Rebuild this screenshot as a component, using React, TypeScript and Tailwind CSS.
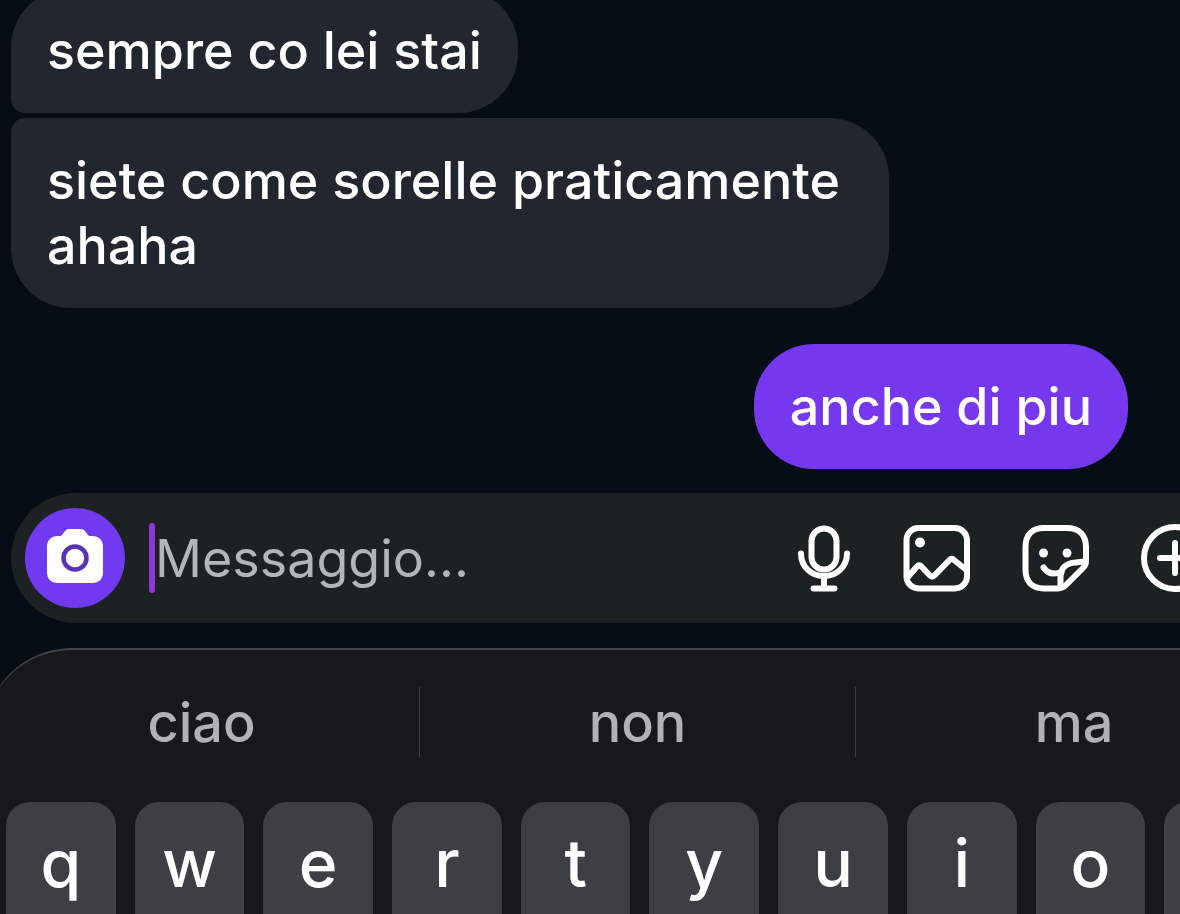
import { useState } from "react"

type Message = {
  id: number
  text: string
  mine?: boolean
  shape: string
}

const messages: Message[] = [
  { id: 1, text: "sempre co lei stai", shape: "rounded-[60px] rounded-bl-[14px]" },
  { id: 2, text: "siete come sorelle praticamente ahaha", shape: "mt-[5px] rounded-[60px] rounded-tl-[14px]" },
  { id: 3, text: "anche di piu", mine: true, shape: "mt-9 rounded-[60px]" },
]

const suggestions = ["ciao", "non", "ma"]

const topRow = ["q", "w", "e", "r", "t", "y", "u", "i", "o", "p"]

function CameraIcon() {
  return (
    <svg viewBox="0 0 56 54" className="h-[54px] w-14" fill="none" aria-hidden="true">
      <path
        d="M11 7h1.500c1.500 0 2.500-.8 3.500-2.300C18 2 19.500 0 22 0h12c2.500 0 4 2 6 4.700C41 6.200 42 7 43.500 7H45c7 0 11 4 11 11v25c0 7-4 11-11 11H11C4 54 0 50 0 43V18C0 11 4 7 11 7Z"
        fill="#fff"
      />
      <circle cx="28" cy="29" r="11.500" stroke="#5a33b4" strokeWidth="4.500" />
    </svg>
  )
}

function MicIcon() {
  return (
    <svg viewBox="0 0 56 70" className="h-[70px] w-14" fill="none" stroke="currentColor" strokeWidth="6" strokeLinecap="round" aria-hidden="true">
      <rect x="15.500" y="5.500" width="25" height="41" rx="12.500" />
      <path d="M5 30.500c0 13 10 22.500 23 22.500s23-9.500 23-22.500M28 53v12M17.500 65.500h21" />
    </svg>
  )
}

function ImageIcon() {
  return (
    <svg viewBox="0 0 68 68" className="size-[68px]" fill="none" stroke="currentColor" strokeWidth="6" strokeLinecap="round" strokeLinejoin="round" aria-hidden="true">
      <rect x="3.500" y="4" width="60.500" height="60.500" rx="12" />
      <circle cx="17" cy="18.500" r="5" fill="currentColor" stroke="none" />
      <path d="m4 54 10-11.500c1.400-1.600 3-1.600 4.400 0l8.600 9c1.400 1.500 3 1.500 4.400 0L46.500 36c1.400-1.600 3-1.600 4.400 0L63.500 46" />
    </svg>
  )
}

function StickerIcon() {
  return (
    <svg viewBox="0 0 68 68" className="size-[68px]" fill="none" stroke="currentColor" strokeWidth="6" strokeLinecap="round" strokeLinejoin="round" aria-hidden="true">
      <path d="M22 4h23c12 0 19 7 19 19v14c0 3-1 5-3 7L44 61c-2.500 2.500-4.500 3.500-8 3.500H22c-12 0-18.500-7-18.500-19V23C3.500 11 10 4 22 4Z" />
      <path d="M38.500 63V53c0-9 6-14 15-14.500l9.500-1" />
      <path d="M21.500 43.500c4 6 10 7.500 18 4.500" />
      <circle cx="21.500" cy="29" r="4.500" fill="currentColor" stroke="none" />
      <circle cx="45" cy="29" r="4.500" fill="currentColor" stroke="none" />
    </svg>
  )
}

function PlusIcon() {
  return (
    <svg viewBox="0 0 68 68" className="size-[68px]" fill="none" stroke="currentColor" strokeWidth="6" strokeLinecap="round" aria-hidden="true">
      <circle cx="34" cy="34" r="31" />
      <path d="M34 19v30M19 34h30" />
    </svg>
  )
}

const actions = [
  { label: "Messaggio vocale", Icon: MicIcon },
  { label: "Galleria", Icon: ImageIcon },
  { label: "Adesivi", Icon: StickerIcon },
  { label: "Altro", Icon: PlusIcon },
]

function Thread() {
  return (
    <section className="flex min-h-0 flex-1 flex-col justify-end overflow-hidden pr-[52px] pb-6 pl-[11px]">
      {messages.map((message) => (
        <p
          key={message.id}
          className={`max-w-[878px] shrink-0 px-9 py-[30px] text-[52px] leading-[65px] font-medium text-white ${message.shape} ${
            message.mine ? "self-end bg-[#7638ee]" : "self-start bg-[#22262e]"
          }`}
        >
          {message.text}
        </p>
      ))}
    </section>
  )
}

function Composer({ draft, onChange }: { draft: string; onChange: (value: string) => void }) {
  return (
    <div className="min-w-[1280px] px-[11px]">
      <div className="flex h-[130px] items-center rounded-full bg-[#1c2122] pr-[60px] pl-3.5 text-white">
        <button
          aria-label="Fotocamera"
          className="flex size-[100px] shrink-0 items-center justify-center rounded-full bg-[#7139f0] pb-1"
        >
          <CameraIcon />
        </button>
        <span className="ml-6 h-[70px] w-1.5 shrink-0 rounded-sm bg-[#8f35dc]" />
        <input
          aria-label="Messaggio"
          placeholder="Messaggio..."
          value={draft}
          onChange={(e) => onChange(e.target.value)}
          className="h-20 min-w-0 flex-1 bg-transparent text-[52px] caret-transparent outline-none placeholder:text-[#b3b6b9]"
        />
        <div className="flex shrink-0 items-center gap-[51px]">
          {actions.map(({ label, Icon }) => (
            <button key={label} aria-label={label}>
              <Icon />
            </button>
          ))}
        </div>
      </div>
    </div>
  )
}

function Keyboard({ onType }: { onType: (value: string) => void }) {
  return (
    <section className="mt-[25px] -ml-4 h-[266px] min-w-[1308px] shrink-0 overflow-hidden rounded-t-[88px] border-t-2 border-[#41444b] bg-[#16181c]">
      <div className="mb-2 grid h-36 grid-cols-3 items-center divide-x divide-[#3c3f44]">
        {suggestions.map((word) => (
          <button
            key={word}
            onClick={() => onType(word)}
            className="h-[70px] text-[54px] leading-[65px] font-medium text-[#b0b2b5]"
          >
            {word}
          </button>
        ))}
      </div>
      <div className="grid grid-cols-10 gap-[19px] pr-[18px] pl-[22px]">
        {topRow.map((letter) => (
          <button
            key={letter}
            onClick={() => onType(letter)}
            className="h-[150px] rounded-[24px] bg-[#3c4042] pb-7 text-[66px] leading-none font-medium text-white"
          >
            {letter}
          </button>
        ))}
      </div>
    </section>
  )
}

export default function App() {
  const [draft, setDraft] = useState("")
  const append = (value: string) => setDraft((current) => current + value)

  return (
    <main className="flex h-screen w-full flex-col overflow-hidden bg-[#070d16] font-[Inter,sans-serif]">
      <Thread />
      <Composer draft={draft} onChange={setDraft} />
      <Keyboard onType={append} />
    </main>
  )
}
